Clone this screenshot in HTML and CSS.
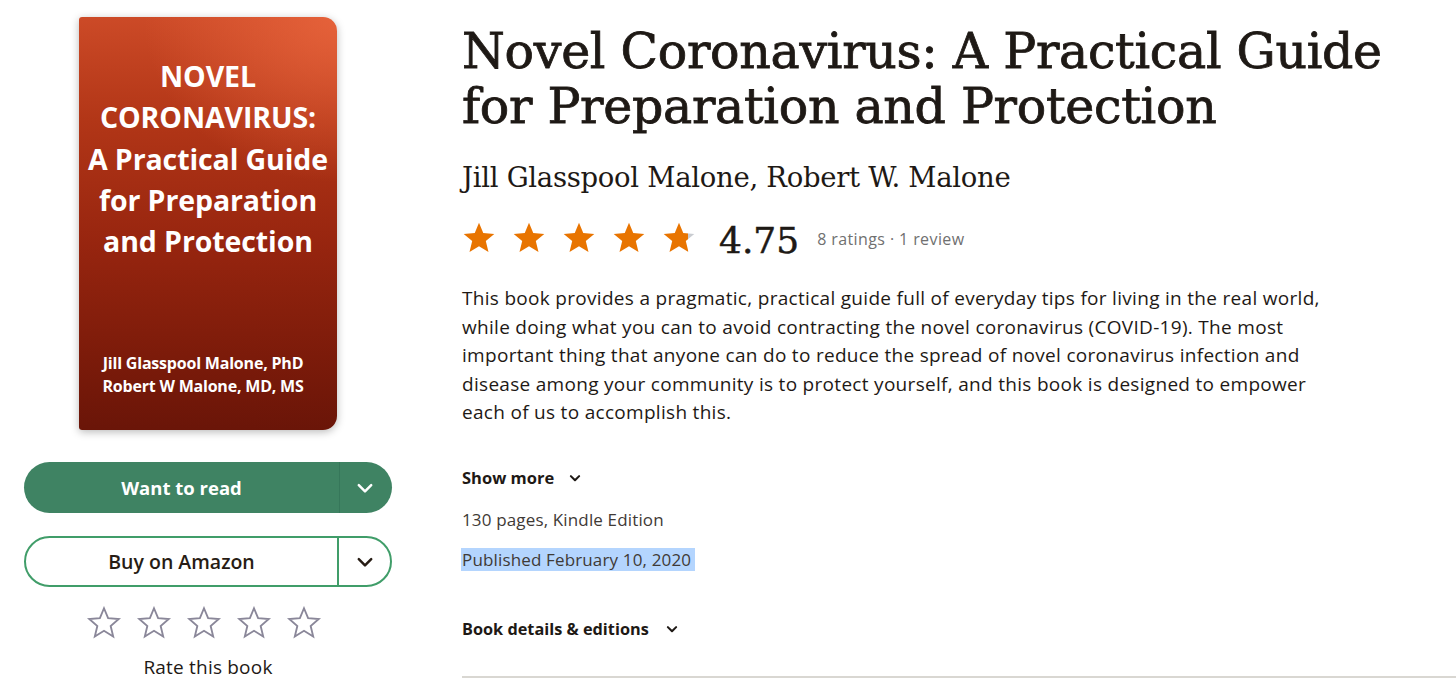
FILE: index.html
```html
<!DOCTYPE html>
<html lang="en">
<head>
<meta charset="utf-8">
<title>Novel Coronavirus: A Practical Guide for Preparation and Protection</title>
<link rel="stylesheet" href="styles.css">
</head>
<body>
<div class="page">
  <aside class="left">
    <div class="cover">
      <div class="cover-title">NOVEL<br>CORONAVIRUS:<br>A Practical Guide<br>for Preparation<br>and Protection</div>
      <div class="cover-authors">Jill Glasspool Malone, PhD<br>Robert W Malone, MD, MS</div>
    </div>
    <div class="btn btn-primary">
      <span class="btn-main">Want to read</span>
      <span class="btn-drop"><svg viewBox="0 0 24 24" width="24" height="24"><path d="M5.8 9.2l6.2 6.2 6.2-6.2" fill="none" stroke="currentColor" stroke-width="2.5" stroke-linecap="round" stroke-linejoin="round"/></svg></span>
    </div>
    <div class="btn btn-outline">
      <span class="btn-main">Buy on Amazon</span>
      <span class="btn-drop"><svg viewBox="0 0 24 24" width="24" height="24"><path d="M5.8 9.2l6.2 6.2 6.2-6.2" fill="none" stroke="currentColor" stroke-width="2.5" stroke-linecap="round" stroke-linejoin="round"/></svg></span>
    </div>
    <div class="rate-stars">
      <svg viewBox="0 0 24 24" width="36" height="34"><polygon class="ostar" points="12,1.6 14.9,8.6 22.4,9.2 16.7,14.1 18.5,21.5 12,17.5 5.5,21.5 7.3,14.1 1.6,9.2 9.1,8.6"/></svg>
      <svg viewBox="0 0 24 24" width="36" height="34"><polygon class="ostar" points="12,1.6 14.9,8.6 22.4,9.2 16.7,14.1 18.5,21.5 12,17.5 5.5,21.5 7.3,14.1 1.6,9.2 9.1,8.6"/></svg>
      <svg viewBox="0 0 24 24" width="36" height="34"><polygon class="ostar" points="12,1.6 14.9,8.6 22.4,9.2 16.7,14.1 18.5,21.5 12,17.5 5.5,21.5 7.3,14.1 1.6,9.2 9.1,8.6"/></svg>
      <svg viewBox="0 0 24 24" width="36" height="34"><polygon class="ostar" points="12,1.6 14.9,8.6 22.4,9.2 16.7,14.1 18.5,21.5 12,17.5 5.5,21.5 7.3,14.1 1.6,9.2 9.1,8.6"/></svg>
      <svg viewBox="0 0 24 24" width="36" height="34"><polygon class="ostar" points="12,1.6 14.9,8.6 22.4,9.2 16.7,14.1 18.5,21.5 12,17.5 5.5,21.5 7.3,14.1 1.6,9.2 9.1,8.6"/></svg>
    </div>
    <div class="rate-label">Rate this book</div>
  </aside>

  <main class="right">
    <h1 class="title">Novel Coronavirus: A Practical Guide for Preparation and Protection</h1>
    <h3 class="authors">Jill Glasspool Malone, Robert W. Malone</h3>
    <div class="rating">
      <div class="stars">
        <svg viewBox="0 0 24 24" width="36" height="34"><polygon class="fstar" points="12,1.2 15,8.5 22.8,9.1 16.8,14.2 18.7,21.9 12,17.8 5.3,21.9 7.2,14.2 1.2,9.1 9,8.5"/></svg>
        <svg viewBox="0 0 24 24" width="36" height="34"><polygon class="fstar" points="12,1.2 15,8.5 22.8,9.1 16.8,14.2 18.7,21.9 12,17.8 5.3,21.9 7.2,14.2 1.2,9.1 9,8.5"/></svg>
        <svg viewBox="0 0 24 24" width="36" height="34"><polygon class="fstar" points="12,1.2 15,8.5 22.8,9.1 16.8,14.2 18.7,21.9 12,17.8 5.3,21.9 7.2,14.2 1.2,9.1 9,8.5"/></svg>
        <svg viewBox="0 0 24 24" width="36" height="34"><polygon class="fstar" points="12,1.2 15,8.5 22.8,9.1 16.8,14.2 18.7,21.9 12,17.8 5.3,21.9 7.2,14.2 1.2,9.1 9,8.5"/></svg>
        <svg viewBox="0 0 24 24" width="36" height="34"><defs><linearGradient id="part" x1="0" x2="1" y1="0" y2="0"><stop offset="0.78" stop-color="#e87400"/><stop offset="0.78" stop-color="#c9ccd1"/></linearGradient></defs><polygon fill="url(#part)" points="12,1.2 15,8.5 22.8,9.1 16.8,14.2 18.7,21.9 12,17.8 5.3,21.9 7.2,14.2 1.2,9.1 9,8.5"/></svg>
      </div>
      <div class="avg">4.75</div>
      <div class="counts">8&nbsp;ratings · 1&nbsp;review</div>
    </div>
    <p class="desc">This book provides a pragmatic, practical guide full of everyday tips for living in the real world, while doing what you can to avoid contracting the novel coronavirus (COVID-19). The most important thing that anyone can do to reduce the spread of novel coronavirus infection and disease among your community is to protect yourself, and this book is designed to empower each of us to accomplish this.</p>
    <div class="toggle show-more">Show more <svg viewBox="0 0 24 24" width="18" height="18"><path d="M6.5 9.5l5.5 5.5 5.5-5.5" fill="none" stroke="currentColor" stroke-width="2.8" stroke-linecap="round" stroke-linejoin="round"/></svg></div>
    <p class="meta">130 pages, Kindle Edition</p>
    <p class="meta pub"><span class="sel">Published February 10, 2020</span></p>
    <div class="toggle details">Book details &amp; editions <svg viewBox="0 0 24 24" width="18" height="18"><path d="M6.5 9.5l5.5 5.5 5.5-5.5" fill="none" stroke="currentColor" stroke-width="2.8" stroke-linecap="round" stroke-linejoin="round"/></svg></div>
    <div class="divider"></div>
  </main>
</div>
</body>
</html>
```

FILE: styles.css
```css
html, body {
  margin: 0;
  padding: 0;
  background: #ffffff;
}
body {
  font-family: "Open Sans", "Liberation Sans", sans-serif;
  color: #1e1915;
  overflow: hidden;
}
.page {
  display: flex;
  padding: 17px 0 0 24px;
}
.left {
  width: 368px;
  flex: none;
  display: flex;
  flex-direction: column;
  align-items: center;
}
.cover {
  width: 258px;
  height: 413px;
  box-sizing: border-box;
  border-radius: 3px 14px 14px 3px;
  background:
    radial-gradient(ellipse 75% 40% at 100% 0%, rgba(232,100,60,0.9) 0%, rgba(232,100,60,0) 100%),
    linear-gradient(180deg, #cc4a27 0%, #b23617 25%, #97250f 55%, #7c1b0a 82%, #6a1508 100%);
  box-shadow: 0 2px 8px rgba(0,0,0,0.28);
  color: #fff;
  text-align: center;
  font-family: "Open Sans", "Liberation Sans", sans-serif;
  font-weight: 700;
  display: flex;
  flex-direction: column;
  justify-content: space-between;
  padding: 39px 0 32px;
}
.cover-title {
  font-size: 28.5px;
  line-height: 41.3px;
  letter-spacing: -0.1px;
}
.cover-authors {
  font-size: 16px;
  line-height: 23px;
  letter-spacing: -0.2px;
  padding-right: 10px;
}
.btn {
  width: 368px;
  height: 51px;
  box-sizing: border-box;
  border-radius: 26px;
  display: flex;
  align-items: stretch;
  font-weight: 700;
  font-size: 18.5px;
}
.btn-primary {
  margin-top: 32px;
  background: #3f8363;
  color: #fff;
}
.btn-outline {
  margin-top: 23px;
  border: 2px solid #409d69;
  color: #271c14;
  font-weight: 600;
  font-size: 19.5px;
}
.btn-main {
  flex: 1;
  display: flex;
  align-items: center;
  justify-content: center;
}
.btn-drop {
  width: 52px;
  display: flex;
  align-items: center;
  justify-content: center;
  border-left: 1px solid #36775a;
}
.btn-outline .btn-drop {
  width: 51px;
  border-left: 2px solid #409d69;
}
.btn-primary .btn-drop svg { margin-left: -2px; }
.rate-stars {
  margin-top: 19px;
  display: flex;
  gap: 14px;
  margin-right: 8px;
}
.ostar {
  fill: none;
  stroke: #8a8799;
  stroke-width: 1.3;
  stroke-linejoin: miter;
}
.rate-label {
  margin-top: 15px;
  font-size: 19px;
  line-height: 24px;
  letter-spacing: 0.2px;
  color: #1e1915;
}
.right {
  margin-left: 70px;
  flex: none;
  width: 960px;
}
.title {
  margin: 7px 0 0;
  font-family: "DejaVu Serif", "Liberation Serif", serif;
  font-weight: 400;
  font-size: 49px;
  line-height: 55px;
  letter-spacing: -0.3px;
  -webkit-text-stroke: 0.8px #1e1915;
  color: #1e1915;
}
.authors {
  margin: 27px 0 0;
  font-family: "DejaVu Serif", "Liberation Serif", serif;
  font-weight: 400;
  font-size: 27.5px;
  line-height: 32px;
  letter-spacing: -0.3px;
  color: #1e1915;
}
.rating {
  margin-top: 28px;
  display: flex;
  align-items: center;
  height: 34px;
}
.stars {
  display: flex;
  gap: 14px;
  margin-left: -1px;
}
.fstar { fill: #e87400; }
.avg {
  margin-left: 22px;
  font-family: "DejaVu Serif", "Liberation Serif", serif;
  font-size: 36px;
  font-weight: 400;
  line-height: 34px;
  margin-top: 6px;
  -webkit-text-stroke: 0.5px #1e1915;
}
.counts {
  margin-left: 18px;
  font-size: 16px;
  letter-spacing: 0.4px;
  color: #707070;
  margin-top: 2px;
}
.desc {
  margin: 29px 0 0;
  width: 866px;
  font-size: 19px;
  letter-spacing: 0.3px;
  line-height: 28.5px;
  color: #1e1915;
}
.toggle {
  display: flex;
  align-items: center;
  gap: 12px;
  font-weight: 700;
  font-size: 16.5px;
  line-height: 24px;
  color: #1e1915;
}
.show-more { margin-top: 39px; }
.meta {
  margin: 19px 0 0;
  font-size: 17px;
  letter-spacing: 0.15px;
  line-height: 22px;
  color: #3f3a36;
}
.meta.pub { margin-top: 18px; }
.sel {
  background: #b4d5fe;
  padding: 0 4px 0 0;
  margin-left: -1px;
  padding-left: 1px;
}
.details { margin-top: 46px; gap: 14px; font-size: 16.3px; }
.divider {
  margin-top: 35px;
  height: 2px;
  width: 1000px;
  background: #d9d7d2;
}
```
